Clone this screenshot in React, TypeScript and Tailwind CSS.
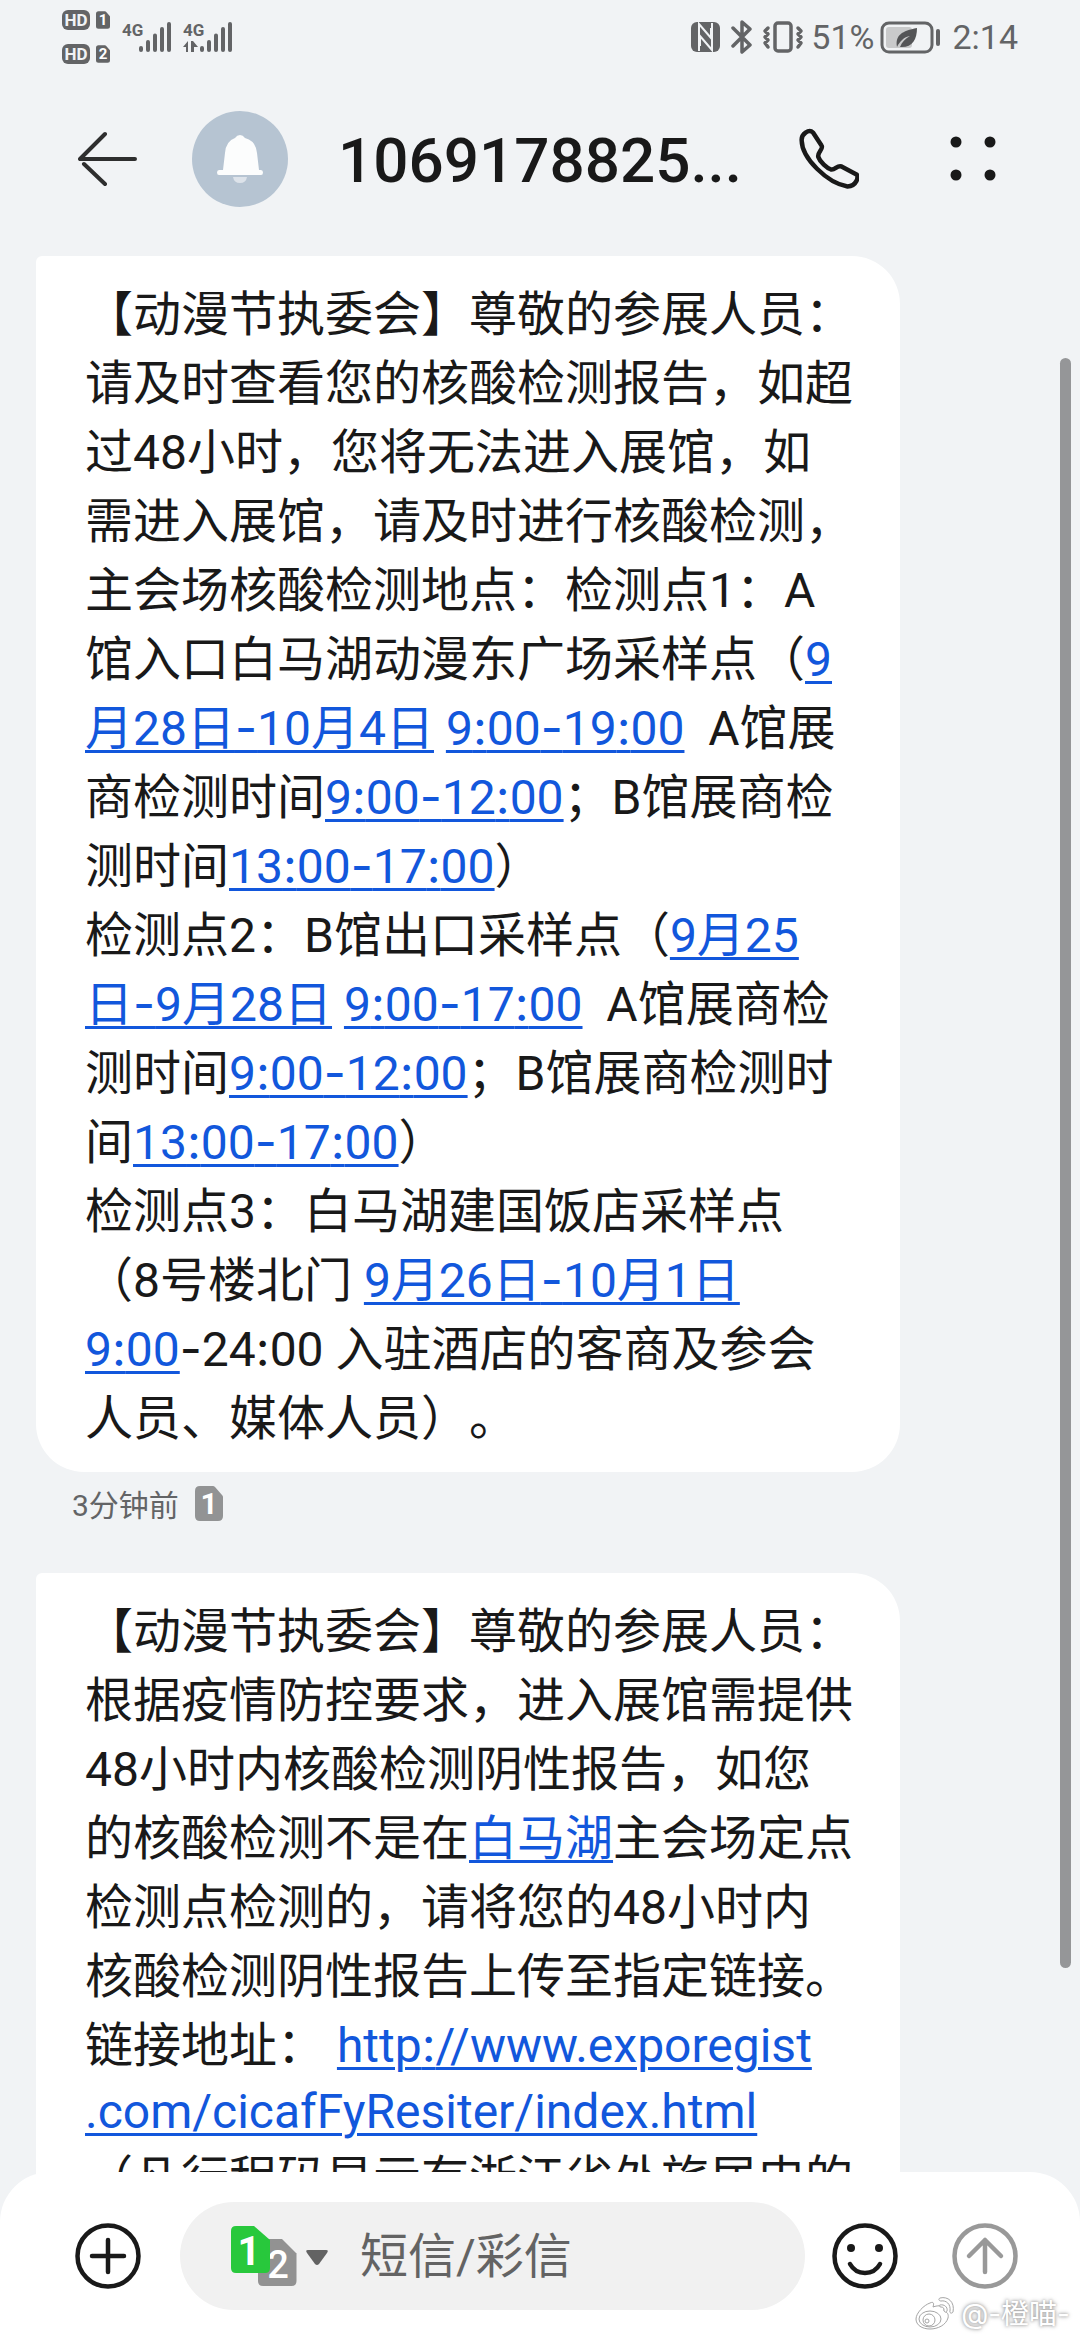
import type { ReactNode } from 'react';

function Hd() {
  return (
    <span className="flex h-5 w-7 items-center justify-center rounded-md bg-[#636466] text-[17px] font-bold leading-5 text-[#f1f3f5]">
      HD
    </span>
  );
}

function Sim({ n, className }: { n: number; className: string }) {
  return (
    <svg viewBox="0 0 28 35" className={className} aria-hidden="true">
      <path d="M5 0h13q1 0 2 1l7 8q1 1 1 2v19q0 5-5 5H5q-5 0-5-5V5q0-5 5-5z" fill="currentColor" />
      <text x="14" y="28" textAnchor="middle" fontSize="30" fontWeight="700" fill="#fff">{n}</text>
    </svg>
  );
}

function Signal({ data }: { data?: boolean }) {
  return (
    <svg viewBox="0 0 52 34" className="h-[34px] w-[52px]" fill="#636466" aria-hidden="true">
      <text x="0" y="16" fontSize="17" fontWeight="700">4G</text>
      <path d="M19 28v2M26 22v8M33 15.500v14.500M40 9v21M47 4v26" stroke="#636466" strokeWidth="4" strokeLinecap="round" />
      {data && <path d="M5 21v11H3v-5H0zM8 21h2l5 6h-4v5H8z" />}
    </svg>
  );
}

function StatusBar() {
  return (
    <div className="flex h-20 items-start justify-between px-[62px] text-[#636466]">
      <div className="flex gap-3 pt-[10px]">
        <div className="grid grid-cols-[28px_14px] gap-x-[6px] gap-y-[14px]">
          <Hd />
          <Sim n={1} className="h-5 w-[14px]" />
          <Hd />
          <Sim n={2} className="h-5 w-[14px]" />
        </div>
        <div className="flex gap-[9px] pt-[10px]">
          <Signal />
          <Signal data />
        </div>
      </div>
      <div className="flex items-center pt-5">
        <svg viewBox="0 0 120 34" className="h-[34px] w-[120px]" aria-hidden="true">
          <rect x="4" y="2" width="29" height="30" rx="6" fill="#636466" />
          <path d="M12 31V4l12 14V8M25 3v27L13 16v10" fill="none" stroke="#f1f3f5" strokeWidth="2" />
          <g fill="none" stroke="#636466" strokeWidth="3.500" strokeLinejoin="round" strokeLinecap="round">
            <path d="M46 8l17 17-8 7V2l8 7-17 17" />
            <rect x="88" y="3" width="16" height="28" rx="3" />
            <path d="M81 8l-3 3 3 3-3 3 3 3-3 3 3 4M111 8l3 3-3 3 3 3-3 3 3 3-3 4" />
          </g>
        </svg>
        <span className="ml-1 text-[34px] leading-[34px]">51%</span>
        <svg viewBox="0 0 62 34" className="ml-[6px] h-[34px] w-[62px]" aria-hidden="true">
          <rect x="2" y="3" width="50" height="29" rx="7" fill="none" stroke="#636466" strokeWidth="3" />
          <rect x="6" y="7" width="26" height="21" rx="3" fill="#c9cacb" />
          <path d="M17 27c-2-12 5-16 20-19 0 12-5 20-17 19 2-5 5-8 10-11-6 1-10 5-13 11z" fill="#545557" />
          <path d="M58 11v13" stroke="#636466" strokeWidth="4" strokeLinecap="round" />
        </svg>
        <time className="ml-[10px] text-[34px] leading-[34px]">2:14</time>
      </div>
    </div>
  );
}

function Header() {
  return (
    <header className="flex h-[158px] items-center pl-[78px] pr-[84px] text-[#191919]">
      <button type="button" aria-label="返回">
        <svg viewBox="0 0 60 56" className="h-14 w-[60px]" fill="none" stroke="#2e2e2e" strokeWidth="4" strokeLinecap="round" strokeLinejoin="round" aria-hidden="true">
          <path d="M27 3L2 28h55M27 53L6 33" />
        </svg>
      </button>
      <span className="ml-[54px] flex size-24 shrink-0 items-center justify-center rounded-full bg-[#b6c4d2]">
        <svg viewBox="0 0 46 48" className="h-12 w-[46px]" aria-hidden="true">
          <path d="M23 0q3 0 5 3 11 3 12 15l2 17h2q2 0 2 2.500t-2 2.500H2q-2 0-2-2.500T2 35h4L8 18Q9 6 18 3q2-3 5-3z" fill="#fcfdfd" />
          <path d="M16 42h14q-1 6-7 6t-7-6z" fill="#dde3ea" />
        </svg>
      </span>
      <h1 className="ml-[50px] min-w-0 flex-1 pt-1 text-[62px] font-medium leading-20">1069178825...</h1>
      <button type="button" aria-label="拨打电话">
        <svg viewBox="0 0 62 62" className="h-[62px] w-[62px]" fill="none" stroke="#191919" strokeWidth="4.500" strokeLinejoin="round" aria-hidden="true">
          <path d="M4.700 12.700C4 6 12 .5 16 4.500l8.500 13C27 21 20 24 21.300 29 23 34 30 40 34 41.500c4 1 6-4.500 10.500-3l15 8c2.500 1.500.5 11.500-9 12C30 55 5 30 4.700 12.700z" />
        </svg>
      </button>
      <button type="button" aria-label="更多" className="ml-[91px]">
        <svg viewBox="0 0 46 46" className="size-[46px]" fill="#191919" aria-hidden="true">
          <circle cx="6" cy="6" r="5.500" />
          <circle cx="40" cy="6" r="5.500" />
          <circle cx="6" cy="39" r="5.500" />
          <circle cx="40" cy="39" r="5.500" />
        </svg>
      </button>
    </header>
  );
}

function Bubble({ children }: { children: ReactNode }) {
  return (
    <div className="ml-9 w-4/5 whitespace-pre rounded-[48px] rounded-tl-md bg-white pb-[19px] pl-[49px] pt-6 text-5xl leading-[69px] text-[#191919] [text-spacing-trim:space-all]">
      {children}
    </div>
  );
}

// colons and dashes use Inter, its marks are wider than Roboto's
function Marks({ children }: { children: string }) {
  return children.split(/([:-])/).map((part, i) =>
    part === ':' || part === '-' ? (
      <span key={i} className="font-[Inter] leading-15">{part}</span>
    ) : (
      part
    )
  );
}

function A({ children }: { children: string }) {
  return (
    <a href="#" className="text-[#1257dc] underline decoration-[3px] underline-offset-[5px]">
      <Marks>{children}</Marks>
    </a>
  );
}

function Messages() {
  return (
    <main className="min-h-0 flex-1 overflow-hidden pt-[18px]">
      <Bubble>
        【动漫节执委会】尊敬的参展人员：<br />
        请及时查看您的核酸检测报告，如超<br />
        过48小时，您将无法进入展馆，如<br />
        需进入展馆，请及时进行核酸检测，<br />
        主会场核酸检测地点：检测点1：A<br />
        馆入口白马湖动漫东广场采样点（<A>9</A><br />
        <A>月28日-10月4日</A> <A>9:00-19:00</A>{'  A馆展'}<br />
        商检测时间<A>9:00-12:00</A>；B馆展商检<br />
        测时间<A>13:00-17:00</A>）<br />
        检测点2：B馆出口采样点（<A>9月25</A><br />
        <A>日-9月28日</A> <A>9:00-17:00</A>{'  A馆展商检'}<br />
        测时间<A>9:00-12:00</A>；B馆展商检测时<br />
        间<A>13:00-17:00</A>）<br />
        检测点3：白马湖建国饭店采样点<br />
        （8号楼北门 <A>9月26日-10月1日</A><br />
        <A>9:00</A><Marks>-24:00</Marks> 入驻酒店的客商及参会<br />
        人员、媒体人员）。
      </Bubble>
      <div className="flex h-[101px] items-start gap-4 pl-[72px] pt-[14px] text-[30px] leading-10 text-[#636466]">
        3分钟前
        <Sim n={1} className="h-[35px] w-7 text-[#929394]" />
      </div>
      <Bubble>
        【动漫节执委会】尊敬的参展人员：<br />
        根据疫情防控要求，进入展馆需提供<br />
        48小时内核酸检测阴性报告，如您<br />
        的核酸检测不是在<A>白马湖</A>主会场定点<br />
        检测点检测的，请将您的48小时内<br />
        核酸检测阴性报告上传至指定链接。<br />
        链接地址： <A>http://www.exporegist</A>
        <div className="leading-16"><A>.com/cicafFyResiter/index.html</A></div>
        （凡行程码显示有浙江省外旅居史的
      </Bubble>
    </main>
  );
}

function Composer() {
  return (
    <footer className="relative -mt-12 flex h-[168px] shrink-0 items-center rounded-t-[50px] bg-white pl-[75px] pr-[62px]">
      <button type="button" aria-label="添加">
        <svg viewBox="0 0 66 66" className="size-[66px]" fill="none" stroke="#191919" strokeWidth="4.500" strokeLinecap="round" aria-hidden="true">
          <circle cx="33" cy="33" r="30.500" />
          <path d="M33 17v32M17 33h32" />
        </svg>
      </button>
      <div className="ml-[39px] flex h-27 min-w-0 flex-1 items-center rounded-full bg-[#f1f1f1] pl-[51px] pr-12">
        <button type="button" aria-label="选择SIM卡" className="shrink-0">
          <svg viewBox="0 0 97 60" className="h-15 w-[97px]" aria-hidden="true">
            <path d="M31 13h20l14.500 14.500V55q0 5-5 5H32q-5 0-5-5V17q0-4 4-4z" fill="#929292" />
            <text x="47" y="52" textAnchor="middle" fontSize="38" fontWeight="500" fill="#fff">2</text>
            <path d="M5 0h18l16 14v28q0 5-5 5H5q-5 0-5-5V5q0-5 5-5z" fill="#28c83c" />
            <text x="18" y="39" textAnchor="middle" fontSize="40" fontWeight="700" fill="#fff">1</text>
            <path d="M77 24h18q3 0 1 3l-8 11q-2 2-4 0l-8-11q-2-3 1-3z" fill="#636363" />
          </svg>
        </button>
        <input
          type="text"
          aria-label="短信/彩信"
          placeholder="短信/彩信"
          className="ml-8 h-18 min-w-0 flex-1 bg-transparent text-5xl outline-none placeholder:text-[#636363]"
        />
      </div>
      <button type="button" aria-label="表情" className="ml-[27px]">
        <svg viewBox="0 0 66 66" className="size-[66px]" fill="none" stroke="#191919" strokeWidth="4.500" strokeLinecap="round" aria-hidden="true">
          <circle cx="33" cy="33" r="30.500" />
          <path d="M18 41q5 9 15 9t15-9" />
          <circle cx="19" cy="25" r="4" fill="#191919" stroke="none" />
          <circle cx="47" cy="25" r="4" fill="#191919" stroke="none" />
        </svg>
      </button>
      <button type="button" aria-label="发送" className="ml-[54px]">
        <svg viewBox="0 0 66 66" className="size-[66px]" fill="none" stroke="#999" strokeWidth="4.500" strokeLinecap="round" strokeLinejoin="round" aria-hidden="true">
          <circle cx="33" cy="33" r="30.500" />
          <path d="M33 49V17M17 33l16-16 16 16" />
        </svg>
      </button>
    </footer>
  );
}

function Watermark() {
  return (
    <div className="absolute bottom-2 right-[10px] flex items-center gap-[6px] font-[Inter,'Noto_Sans_CJK_SC',sans-serif] text-[28px] leading-9 text-white">
      <svg viewBox="0 0 40 36" className="h-9 w-10" fill="#fff" stroke="#a5a5a5" strokeWidth="1" aria-hidden="true">
        <path d="M15 7c4-2 4 1 3 4 5-2 13-2 11 4 3 1 5 3 4 7-2 7-10 11-18 11S1 29 1 23C1 17 9 9 15 7z" />
        <ellipse cx="15" cy="23" rx="11" ry="8" />
        <circle cx="14" cy="24" r="6" />
        <circle cx="12" cy="25" r="2" />
        <path d="M25 2c8-2 15 4 13 14-1 2-4 1-3-1 1-7-4-11-9-10-2 0-3-2-1-3zM25 9c4-1 8 2 7 6-1 2-3 1-3-1 0-2-1-3-3-3-2 0-2-2-1-2z" />
      </svg>
      <span className="[text-shadow:0_0_3px_#9a9a9a,0_0_5px_#b0b0b0]">@-橙喵-</span>
    </div>
  );
}

export default function App() {
  return (
    <div className="relative flex h-screen flex-col overflow-hidden bg-[#f1f3f5] font-[Roboto,'Noto_Sans_CJK_SC',sans-serif]">
      <StatusBar />
      <Header />
      <Messages />
      <Composer />
      <div className="absolute right-[9px] top-[358px] h-[1610px] w-[11px] rounded-full bg-[#959698]" />
      <Watermark />
    </div>
  );
}
